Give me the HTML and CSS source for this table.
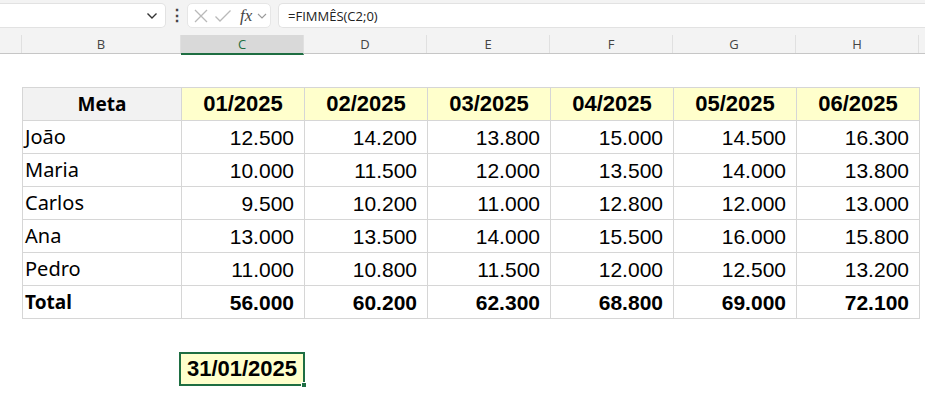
FILE: index.html
```html
<!DOCTYPE html>
<html lang="pt-BR">
<head>
<meta charset="utf-8">
<title>Planilha</title>
<link rel="stylesheet" href="styles.css">
</head>
<body>
<div class="toolbar">
  <div class="namebox">
    <svg class="chev" width="12" height="8" viewBox="0 0 12 8"><path d="M1.5 1.5 L6 6 L10.5 1.5" fill="none" stroke="#333" stroke-width="1.4"/></svg>
  </div>
  <div class="dots">⋮</div>
  <div class="fxbox">
    <svg width="16" height="16" viewBox="0 0 16 16"><path d="M2 2 L14 14 M14 2 L2 14" stroke="#b9b9b9" stroke-width="1.3" fill="none"/></svg>
    <svg width="18" height="16" viewBox="0 0 18 16"><path d="M1.5 8.5 L6 13 L16.5 2.5" stroke="#b9b9b9" stroke-width="1.3" fill="none"/></svg>
    <span class="fx">fx</span>
    <svg width="10" height="8" viewBox="0 0 10 8"><path d="M1 2 L5 6 L9 2" fill="none" stroke="#9a9a9a" stroke-width="1.1"/></svg>
  </div>
  <div class="formula">=FIMMÊS(C2;0)</div>
</div>
<div class="colheads">
  <div class="ch cha"></div>
  <div class="ch chb">B</div>
  <div class="ch chc sel">C</div>
  <div class="ch">D</div>
  <div class="ch">E</div>
  <div class="ch">F</div>
  <div class="ch">G</div>
  <div class="ch">H</div>
</div>
<div class="sheet">
  <table class="grid">
    <colgroup><col class="cb"><col class="cm"><col class="cm"><col class="cm"><col class="cm"><col class="cm"><col class="cm"></colgroup>
    <thead>
      <tr><th class="hmeta">Meta</th><th>01/2025</th><th>02/2025</th><th>03/2025</th><th>04/2025</th><th>05/2025</th><th>06/2025</th></tr>
    </thead>
    <tbody>
      <tr><td class="name">João</td><td>12.500</td><td>14.200</td><td>13.800</td><td>15.000</td><td>14.500</td><td>16.300</td></tr>
      <tr><td class="name">Maria</td><td>10.000</td><td>11.500</td><td>12.000</td><td>13.500</td><td>14.000</td><td>13.800</td></tr>
      <tr><td class="name">Carlos</td><td>9.500</td><td>10.200</td><td>11.000</td><td>12.800</td><td>12.000</td><td>13.000</td></tr>
      <tr><td class="name">Ana</td><td>13.000</td><td>13.500</td><td>14.000</td><td>15.500</td><td>16.000</td><td>15.800</td></tr>
      <tr><td class="name">Pedro</td><td>11.000</td><td>10.800</td><td>11.500</td><td>12.000</td><td>12.500</td><td>13.200</td></tr>
      <tr class="total"><td class="name">Total</td><td>56.000</td><td>60.200</td><td>62.300</td><td>68.800</td><td>69.000</td><td>72.100</td></tr>
    </tbody>
  </table>
  <div class="daterow">
    <div class="datecell">31/01/2025<span class="handle"></span></div>
  </div>
</div>
</body>
</html>
```
FILE: styles.css
```css
* { box-sizing: border-box; }
html, body { margin: 0; padding: 0; background: #fff; }
body { width: 925px; height: 395px; overflow: hidden; font-family: "Liberation Sans", Arial, sans-serif; color: #000; }

.toolbar {
  height: 35px;
  background: #f3f3f3;
  display: flex;
  align-items: flex-start;
  padding-top: 3px;
}
.namebox {
  width: 166px; height: 25px;
  background: #fff;
  border: 1px solid #e2e2e2;
  border-left: none;
  border-radius: 0 5px 5px 0;
  display: flex; align-items: center; justify-content: flex-end;
  padding-right: 7px;
}
.dots {
  width: 21px; height: 25px;
  display: flex; align-items: center; justify-content: center;
  font-size: 16px; font-weight: bold; color: #444;
}
.fxbox {
  width: 84px; height: 25px;
  background: #fff;
  border: 1px solid #e6e6e6;
  border-radius: 5px;
  display: flex; align-items: center;
  padding-left: 5px; gap: 5px;
}
.fx { font-family: "Liberation Serif", serif; font-style: italic; font-size: 17px; color: #444; margin-left: 3px; }
.formula {
  margin-left: 7px;
  flex: 1; height: 25px;
  background: #fff;
  border: 1px solid #e2e2e2;
  border-right: none;
  border-radius: 5px 0 0 5px;
  font-family: "Open Sans", "Noto Sans", sans-serif;
  font-size: 13px; color: #222;
  padding-left: 9px;
  display: flex; align-items: center;
}

.colheads {
  display: flex;
  height: 19px;
  background: #f3f3f3;
  border-bottom: 1px solid #c6c6c6;
  font-family: "Open Sans", "Noto Sans", sans-serif;
  font-size: 13px; color: #444;
}
.ch {
  width: 123px;
  display: flex; align-items: center; justify-content: center;
  border-right: 1px solid #e0e0e0;
}
.cha { width: 22px; }
.chb { width: 159px; }
.sel { background: #d9d9d9; color: #1e6e42; border-bottom: 2px solid #1e6e42; height: 20px; }

.sheet { padding: 33px 0 0 22px; }
.grid {
  border-collapse: collapse;
  table-layout: fixed;
  width: 898px;
}
.cb { width: 159px; }
.cm { width: 123px; }
.grid th, .grid td {
  height: 33px;
  border: 1px solid #d6d6d6;
  padding: 0 10px 0 3px;
  font-size: 21px;
  line-height: 1;
}
.grid th {
  background: #ffffcc;
  font-weight: bold;
  font-size: 22px;
  text-align: center;
  padding: 0;
}
.grid th.hmeta {
  background: #f2f2f2;
  font-family: "Noto Sans", "Open Sans", sans-serif;
  font-size: 19px;
}
.grid td { text-align: right; }
.grid td.name {
  text-align: left;
  font-family: "Noto Sans", "Open Sans", sans-serif;
  font-size: 20px;
  padding-left: 2px;
}
.total td { font-weight: bold; }
.total td.name { font-size: 19px; }

.daterow { padding: 33px 0 0 157px; }
.datecell {
  position: relative;
  width: 126px; height: 34px;
  background: #ffffcc;
  border: 2px solid #1e6e42;
  font-size: 22px; font-weight: bold;
  display: flex; align-items: center; justify-content: center;
}
.handle {
  position: absolute;
  right: -4px; bottom: -4px;
  width: 6px; height: 6px;
  background: #1e6e42;
  border: 1px solid #fff;
}
```
